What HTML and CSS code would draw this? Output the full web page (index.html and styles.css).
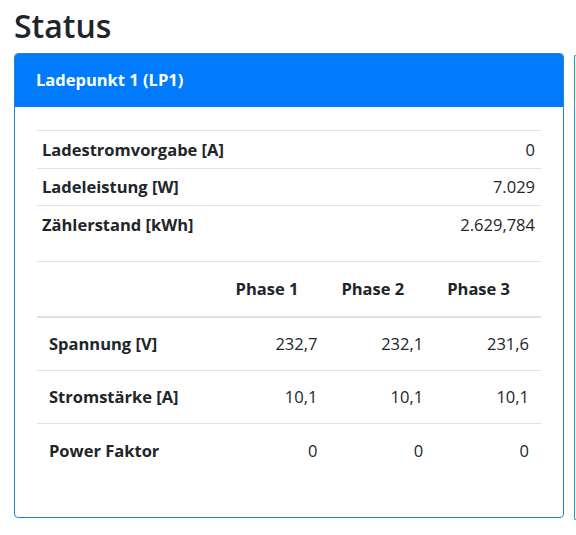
FILE: index.html
```html
<!DOCTYPE html>
<html lang="de">
<head>
<meta charset="utf-8">
<link rel="stylesheet" href="styles.css">
</head>
<body>
<h1 class="title">Status</h1>
<div class="deck">
  <div class="card">
    <div class="card-header">Ladepunkt 1 (LP1)</div>
    <div class="card-body">
      <table class="tbl tbl-sm">
        <tbody>
          <tr><th>Ladestromvorgabe [A]</th><td>0</td></tr>
          <tr><th>Ladeleistung [W]</th><td>7.029</td></tr>
          <tr><th>Zählerstand [kWh]</th><td>2.629,784</td></tr>
        </tbody>
      </table>
      <table class="tbl tbl-phase">
        <thead>
          <tr><th class="lbl"></th><th>Phase 1</th><th>Phase 2</th><th>Phase 3</th></tr>
        </thead>
        <tbody>
          <tr><th>Spannung [V]</th><td>232,7</td><td>232,1</td><td>231,6</td></tr>
          <tr><th>Stromstärke [A]</th><td>10,1</td><td>10,1</td><td>10,1</td></tr>
          <tr><th>Power Faktor</th><td>0</td><td>0</td><td>0</td></tr>
        </tbody>
      </table>
    </div>
  </div>
  <div class="card card-next"></div>
</div>
</body>
</html>
```
FILE: styles.css
```css
* { box-sizing: border-box; }
html, body { margin: 0; padding: 0; }
body {
  font-family: "Open Sans", "Noto Sans", sans-serif;
  font-size: 16.5px;
  color: #212529;
  background: #fff;
  overflow: hidden;
  width: 576px;
  height: 535px;
}
.title {
  margin: 0;
  padding: 3px 0 0 14px;
  font-size: 32px;
  font-weight: 600;
  line-height: 46px;
  height: 53px;
}
.deck {
  display: flex;
  gap: 10px;
  padding-left: 14px;
}
.card {
  flex: 0 0 550px;
  width: 550px;
  height: 465px;
  border: 1px solid #2a84c0;
  border-radius: 4px;
  overflow: hidden;
}
.card-next {
  flex: 0 0 2px;
  width: 2px;
  margin-top: 2px;
  border-color: #1f9bb8;
  border-right: 0;
  border-radius: 4px 0 0 4px;
}
.card-header {
  background: #007bff;
  color: #fff;
  font-weight: 700;
  height: 54px;
  line-height: 54px;
  padding: 0 22px;
  margin: -1px -1px 0 -1px;
}
.card-body {
  padding: 23px 22px 0 22px;
}
.tbl {
  width: 504px;
  border-collapse: collapse;
}
.tbl th { font-weight: 700; text-align: left; }
.tbl-sm { margin-bottom: 18px; }
.tbl-sm th, .tbl-sm td {
  border-top: 1px solid #dee2e6;
  padding: 0 6px 0 5px;
  height: 37.5px;
}
.tbl-sm td { text-align: right; }
.tbl-phase thead th {
  border-top: 1px solid #dee2e6;
  border-bottom: 2px solid #dee2e6;
  height: 55px;
  padding: 0 12px;
  width: 106px;
}
.tbl-phase thead th.lbl { width: 187px; }
.tbl-phase tbody th, .tbl-phase tbody td {
  border-top: 1px solid #dee2e6;
  height: 53.5px;
  padding: 0 12px;
}
.tbl-phase tbody tr:first-child th, .tbl-phase tbody tr:first-child td { border-top: 0; }
.tbl-phase tbody td { text-align: right; }
```
